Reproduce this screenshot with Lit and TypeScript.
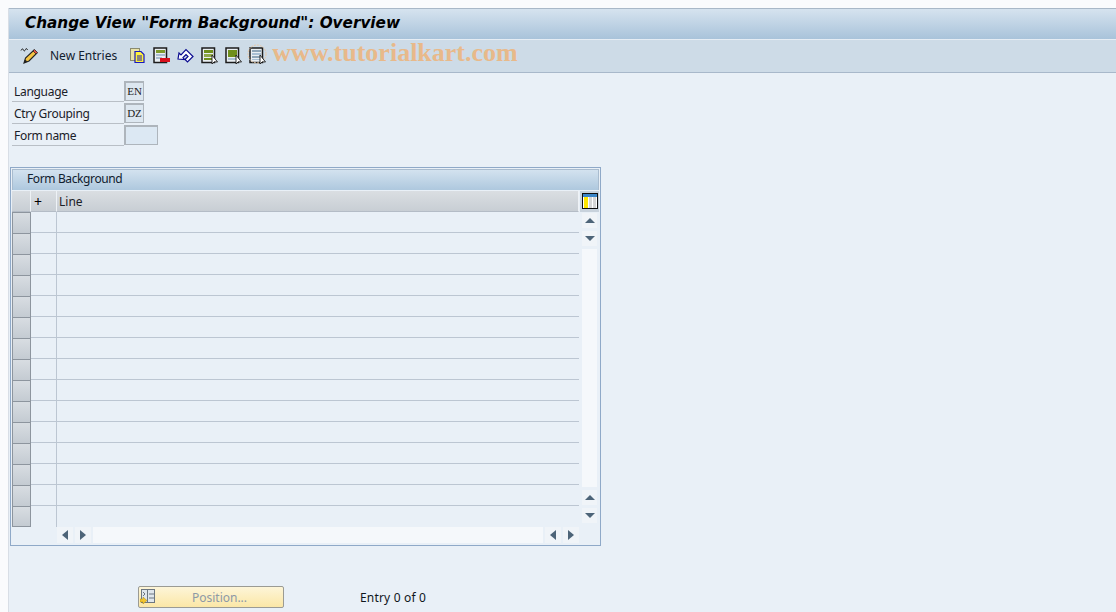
import { LitElement, html, css, svg } from "lit";
import { customElement } from "lit/decorators.js";

const CURSOR = svg`<path d="M11 8v9l2.2-2.2 3.3.2z" fill="#fff" stroke="#1c1c1c" stroke-width=".9"/>`;

const docIcon = (kind: string) => {
  const stripes: Record<string, unknown> = {
    del: svg`<rect x="3" y="3" width="9" height="3" fill="#7d9a2c"/><rect x="3" y="7" width="9" height="2" fill="#a9bcd0"/><rect x="3" y="10" width="6" height="2" fill="#a9bcd0"/><rect x="7" y="11" width="10" height="4" fill="#d8101c"/>`,
    sel: svg`<rect x="3" y="3" width="9" height="3" fill="#6f8f1c"/><rect x="3" y="7" width="9" height="3" fill="#8fa84a"/><rect x="3" y="11" width="9" height="2" fill="#6f8f1c"/>${CURSOR}`,
    all: svg`<rect x="3" y="3" width="9" height="7" fill="#6f8f1c"/><rect x="3" y="11" width="9" height="2" fill="#a9c0d4"/>${CURSOR}`,
    none: svg`<circle cx="8" cy="7" r="9" fill="none" stroke="#e9c9a6" stroke-width="1" stroke-dasharray="2 1"/><rect x="3" y="3" width="9" height="2" fill="#8fa6b8"/><rect x="3" y="6" width="9" height="2" fill="#a9c0d4"/><rect x="3" y="9" width="9" height="2" fill="#8fa6b8"/><rect x="3" y="12" width="9" height="1" fill="#a9c0d4"/>${CURSOR}`,
  };
  return html`<svg class="ic" width="17" height="17" viewBox="0 0 17 17">
    <rect x="1" y="1" width="12.5" height="14.5" fill="#e9eef2" stroke="#1c1c1c" stroke-width="1.5"/>
    ${stripes[kind]}
  </svg>`;
};

const UP = html`<svg width="10" height="5"><path d="M0 5L5 0l5 5z" fill="#4d6478"/></svg>`;
const DOWN = html`<svg width="10" height="5"><path d="M0 0l5 5 5-5z" fill="#4d6478"/></svg>`;
const LEFT = html`<svg width="6" height="10"><path d="M6 0L0 5l6 5z" fill="#4d6478"/></svg>`;
const RIGHT = html`<svg width="6" height="10"><path d="M0 0l6 5-6 5z" fill="#4d6478"/></svg>`;

@customElement("app-root")
export class AppRoot extends LitElement {
  static styles = css`
    :host {
      display: block;
      width: 1116px;
      height: 612px;
      overflow: hidden;
      background: #fafbfd;
      font-family: "Noto Sans", "DejaVu Sans", sans-serif;
      font-size: 12px;
      color: #10161c;
    }
    .window {
      margin: 8px 0 0 8px;
      height: 604px;
      display: flex;
      flex-direction: column;
      background: #e9f0f7;
      border-left: 1px solid #d8dee6;
    }
    .title {
      height: 31px;
      flex: none;
      box-sizing: border-box;
      border-top: 1px solid #a9b8c8;
      background: linear-gradient(#d6e3ef, #a9c3da);
      display: flex;
      align-items: center;
      padding: 0 0 2px 16px;
      font: italic bold 15.25px "DejaVu Sans", sans-serif;
      color: #000;
      white-space: nowrap;
    }
    .toolbar {
      height: 34px;
      flex: none;
      box-sizing: border-box;
      border-top: 1px solid #e6edf4;
      border-bottom: 1px solid #a8b8ca;
      background: #cddbe7;
      display: flex;
      align-items: center;
      padding: 0 0 2px 11px;
      white-space: nowrap;
    }
    .pencil { margin-right: 12px; }
    .new { color: #12202e; margin-right: 12px; font-size: 12px; }
    .ic { margin-right: 7px; flex: none; overflow: visible; }
    .wm {
      font: bold 26px "Liberation Serif", serif;
      color: #e8b98a;
      margin: -5px 0 0 -1px;
    }
    .form {
      flex: none;
      padding: 7px 0 0 3px;
      display: grid;
      grid-template-columns: 112px auto;
      grid-auto-rows: 22px;
      justify-content: start;
      height: 94px;
      box-sizing: border-box;
    }
    .lab {
      border-bottom: 1px solid #b9bfc6;
      padding: 1px 0 0 2px;
      line-height: 22px;
      height: 22px;
      box-sizing: border-box;
      color: #1a2028;
      letter-spacing: -0.3px;
    }
    .field { display: flex; align-items: center; }
    .inp {
      box-sizing: border-box;
      height: 20px;
      width: 20px;
      margin-top: -1px;
      border: 2px solid #aeb5bc;
      border-right-width: 1px;
      border-bottom-width: 1px;
      background: #dde7f0;
      font: 11px "Liberation Serif", serif;
      color: #222;
      display: flex;
      align-items: center;
      justify-content: center;
    }
    .inp.wide { width: 34px; background: #dce8f3; }
    .panel {
      flex: none;
      margin-left: 1px;
      width: 591px;
      height: 379px;
      box-sizing: border-box;
      border: 1px solid #8fa9c8;
      padding: 1px;
      display: flex;
      flex-direction: column;
    }
    .ptitle {
      height: 21px;
      flex: none;
      background: linear-gradient(#d3e2ef, #aec8de);
      padding-left: 14px;
      line-height: 17px;
      color: #10202e;
      border: 1px solid #a9bccf;
      border-width: 1px 1px 0;
      box-sizing: border-box;
      letter-spacing: -0.38px;
    }
    .tbl {
      display: grid;
      grid-template-columns: 19px 26px 522px 1fr;
      grid-template-rows: 21px repeat(15, 21px);
      margin-top: 1px;
    }
    .hc {
      background: linear-gradient(#dadee2, #c8ced4);
      border-bottom: 1px solid #b4bcc6;
      box-sizing: border-box;
      border-right: 1px solid #eef2f6;
      line-height: 21px;
      padding-left: 2px;
      color: #1b2026;
    }
    .hc.plus { padding-left: 3px; font-size: 14px; color: #000; }
    .hc.cfg {
      background: #c8d2dc;
      border: 0;
      padding: 2px 0 0 2px;
      margin-left: 1px;
      display: flex;
    }
    .sel {
      box-sizing: border-box;
      background: linear-gradient(#d8dde2, #c4cbd2);
      border: 1px solid #8d959e;
      border-width: 1px 1px 0 1px;
    }
    .sel.last { border-bottom: 1px solid #8d959e; }
    .c2 {
      border-bottom: 1px solid #bcc6d2;
      border-right: 1px solid #bcc6d2;
      box-sizing: border-box;
    }
    .c3 { border-bottom: 1px solid #bcc6d2; box-sizing: border-box; }
    .lastrow { border-bottom: 0; }
    .vbar {
      grid-column: 4;
      grid-row: 2 / span 15;
      display: flex;
      flex-direction: column;
      gap: 3px;
      padding: 1px 0 4px 3px;
    }
    .sb {
      width: 16px;
      height: 16px;
      background: #f0f4f8;
      display: flex;
      align-items: center;
      justify-content: center;
      flex: none;
    }
    .vbar .sb { width: 15px; height: 15px; }
    .vtrack { flex: 1; background: #f5f8fb; width: 15px; }
    .hbar {
      display: flex;
      height: 16px;
      margin-left: 45px;
      gap: 2px;
    }
    .htrack { flex: none; width: 450px; background: #f5f8fb; }
    .foot {
      flex: none;
      margin-top: 40px;
      margin-left: 129px;
      display: flex;
      align-items: center;
    }
    .btn {
      box-sizing: border-box;
      width: 146px;
      height: 22px;
      border: 1px solid #9b9b94;
      border-radius: 2px;
      background: linear-gradient(#fdf5d8, #fbe7a6);
      position: relative;
      color: #8d99a6;
      text-align: center;
      line-height: 22px;
      padding-left: 17px;
    }
    .btn svg { position: absolute; left: 1px; top: 1px; }
    .entry { margin-left: 76px; color: #10161c; letter-spacing: 0.18px; }
  `;

  render() {
    const rows = Array.from({ length: 15 }, (_, i) => i);
    return html`
      <div class="window">
        <div class="title">Change View "Form Background": Overview</div>
        <div class="toolbar">
          <svg class="pencil" width="18" height="17" viewBox="0 0 18 17">
            <path d="M1 3.500c.8-2 2-2 2.500-.5s1.500 1 2-.5 1.500-1 2 .5" fill="none" stroke="#222" stroke-width="1"/>
            <path d="M4 16l1.500-5L14 3l3 3-8 8z" fill="#f6c544" stroke="#222" stroke-width="1.100"/>
            <path d="M13 4l3 3 1.500-1.500-3-3z" fill="#e0524a" stroke="#222" stroke-width=".7"/>
            <path d="M4 16l1-3.500 2.500 2z" fill="#222"/>
          </svg>
          <span class="new">New Entries</span>
          <svg class="ic" width="17" height="17" viewBox="0 0 17 17">
            <rect x="1.500" y="1.500" width="9" height="12" fill="#e8e2a8" stroke="#8a8a70"/>
            <path d="M6 4.500h6l3 3v8H6z" fill="#fff23a" stroke="#1818c0" stroke-width="1.200"/>
            <path d="M8 9h5M8 11h5M8 13h5" stroke="#1818c0"/>
          </svg>
          ${docIcon("del")}
          <svg class="ic" width="17" height="17" viewBox="0 0 17 17">
            <path d="M1 12l1-6 2 2 5-5.500 7 7-5.500 5.500-2.500-2.500 3-3-2-2-3 3 1.500 2z" fill="#fff" stroke="#0a0a90" stroke-width="1.200" stroke-linejoin="miter"/>
          </svg>
          ${docIcon("sel")} ${docIcon("all")} ${docIcon("none")}
          <span class="wm">www.tutorialkart.com</span>
        </div>
        <div class="form">
          <div class="lab">Language</div>
          <div class="field"><div class="inp">EN</div></div>
          <div class="lab">Ctry Grouping</div>
          <div class="field"><div class="inp">DZ</div></div>
          <div class="lab">Form name</div>
          <div class="field"><div class="inp wide"></div></div>
        </div>
        <div class="panel">
          <div class="ptitle">Form Background</div>
          <div class="tbl">
            <div class="hc"></div>
            <div class="hc plus">+</div>
            <div class="hc">Line</div>
            <div class="hc cfg">
              <svg width="16" height="16" viewBox="0 0 16 16">
                <rect x=".5" y=".5" width="15" height="15" fill="#fff" stroke="#111"/>
                <rect x="1" y="1" width="14" height="3" fill="#3b86c8"/>
                <rect x="2" y="4" width="4" height="11" fill="#ffe600"/>
                <rect x="7" y="4" width="3" height="11" fill="#d6d6d6"/>
                <rect x="11" y="4" width="3" height="11" fill="#d6d6d6"/>
              </svg>
            </div>
            ${rows.map(
              (i) => html`
                <div class="sel ${i === 14 ? "last" : ""}"></div>
                <div class="c2 ${i === 14 ? "lastrow" : ""}"></div>
                <div class="c3 ${i === 14 ? "lastrow" : ""}"></div>
              `,
            )}
            <div class="vbar">
              <div class="sb">${UP}</div>
              <div class="sb">${DOWN}</div>
              <div class="vtrack"></div>
              <div class="sb">${UP}</div>
              <div class="sb">${DOWN}</div>
            </div>
          </div>
          <div class="hbar">
            <div class="sb">${LEFT}</div>
            <div class="sb">${RIGHT}</div>
            <div class="htrack"></div>
            <div class="sb">${LEFT}</div>
            <div class="sb">${RIGHT}</div>
          </div>
        </div>
        <div class="foot">
          <div class="btn">
            <svg width="16" height="18" viewBox="0 0 16 18">
              <rect x="1.500" y="1.500" width="13" height="13" fill="#dfe6ec" stroke="#6c7680"/>
              <path d="M7.500 1.500v13M9 6h5M9 10h5M3 4l2 2-2 2" stroke="#6c7680" fill="none"/>
              <path d="M0 11h3V9l4 3.500L3 16v-2H0z" fill="#f3c52e" stroke="#a98a1a" stroke-width=".5"/>
            </svg>
            Position...
          </div>
          <span class="entry">Entry 0 of 0</span>
        </div>
      </div>
    `;
  }
}
